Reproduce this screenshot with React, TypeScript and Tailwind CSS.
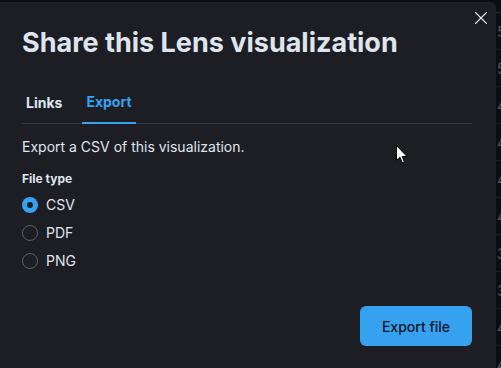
import React, { useState } from "react";
import { X } from "lucide-react";

const rowDigits = ["5", "5", "4", "4", "4", "4", "3", "3", "4", "4", "4"];

const FILE_TYPES = ["CSV", "PDF", "PNG"];

export default function App() {
  const [tab, setTab] = useState("export");
  const [fileType, setFileType] = useState("CSV");

  return (
    <div
      className="relative flex flex-col w-[501px] h-[368px] bg-[#0c0d10] overflow-hidden"
      style={{ fontFamily: "Inter, 'Noto Sans', sans-serif" }}
    >
      <div className="flex flex-1 min-h-0 overflow-hidden pt-[2px]">
        {/* modal */}
        <div className="relative flex flex-col w-[496px] h-full bg-[#1d1e24] rounded-tr-[6px]">
          <button className="absolute right-[4px] top-[5px] text-[#dfe5ef]">
            <X size={22} strokeWidth={1.2} />
          </button>

          <div className="pl-[22px] pr-[24px] pt-[24px]">
            <h1 className="text-[27px] leading-[34px] font-bold text-[#dfe5ef]">
              Share this Lens visualization
            </h1>
          </div>

          <div className="ml-[22px] mr-[24px] mt-[32px] flex gap-[16px] border-b border-[#343741]">
            <button
              onClick={() => setTab("links")}
              className={`pb-[10px] px-[4px] text-[14px] leading-[20px] font-bold ${
                tab === "links" ? "text-[#36a2ef] border-b-2 border-[#36a2ef] -mb-px" : "text-[#dfe5ef]"
              }`}
            >
              Links
            </button>
            <button
              onClick={() => setTab("export")}
              className={`pb-[10px] px-[4px] text-[14px] leading-[20px] font-bold ${
                tab === "export" ? "text-[#36a2ef] border-b-2 border-[#36a2ef] -mb-px" : "text-[#dfe5ef]"
              }`}
            >
              Export
            </button>
          </div>

          <div className="pl-[22px] pt-[13px] flex flex-col">
            <p className="text-[14px] leading-[20px] text-[#dfe5ef]">Export a CSV of this visualization.</p>
            <div className="mt-[14px] text-[12px] leading-[16px] font-bold text-[#dfe5ef]">File type</div>
            <div className="mt-[10px] flex flex-col gap-[12px]">
              {FILE_TYPES.map(t => (
                <label
                  key={t}
                  onClick={() => setFileType(t)}
                  className="flex items-center gap-[8px] h-[16px] cursor-pointer"
                >
                  {fileType === t ? (
                    <span className="flex items-center justify-center w-[16px] h-[16px] rounded-full bg-[#36a2ef]">
                      <span className="w-[6px] h-[6px] rounded-full bg-[#1d1e24]" />
                    </span>
                  ) : (
                    <span className="w-[16px] h-[16px] rounded-full border border-[#5a5e68]" />
                  )}
                  <span className="text-[14px] leading-[20px] text-[#dfe5ef]">{t}</span>
                </label>
              ))}
            </div>
          </div>

          <div className="flex justify-end mt-auto mr-[24px] mb-[22px]">
            <button className="h-[40px] w-[112px] rounded-[6px] bg-[#36a2ef] text-[14px] font-medium text-[#0b1628]">
              Export file
            </button>
          </div>
        </div>

        {/* background table peeking out */}
        <div className="flex-1 h-full overflow-hidden flex flex-col pt-[10px]">
          <div className="border-t border-[#2a2b30]" />
          {rowDigits.map((d, i) => (
            <div
              key={i}
              className="h-[37px] shrink-0 border-b border-[#1f2025] pl-[1px] flex items-center text-[14px] text-[#55575e]"
            >
              {d}
            </div>
          ))}
        </div>
      </div>

      {/* mouse cursor */}
      <svg className="absolute left-[396px] top-[145px]" width="12" height="19" viewBox="0 0 12 19">
        <path d="M0.5 0.5 L0.5 15.5 L4 12.2 L6.3 17.8 L8.4 16.9 L6.2 11.5 L11 11.5 Z" fill="#fff" stroke="#000" strokeWidth="1" />
      </svg>
    </div>
  );
}
